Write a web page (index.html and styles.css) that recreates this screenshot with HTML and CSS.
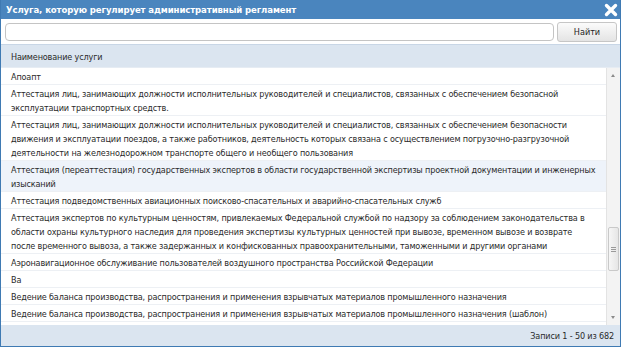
FILE: index.html
```html
<!DOCTYPE html>
<html lang="ru">
<head>
<meta charset="utf-8">
<link rel="stylesheet" href="styles.css">
</head>
<body>
<div class="dialog">
  <div class="titlebar">
    <span class="title">Услуга, которую регулирует административный регламент</span>
    <svg class="close" width="14" height="14" viewBox="0 0 14 14"><path d="M2.5 2.5 L11.5 11.5 M11.5 2.5 L2.5 11.5" stroke="#fff" stroke-width="3.4" stroke-linecap="round"/></svg>
  </div>
  <div class="search">
    <input class="field" type="text">
    <button class="btn">Найти</button>
  </div>
  <div class="header">Наименование услуги</div>
  <div class="listwrap">
    <div class="list">
      <div class="row">Апоапт</div>
      <div class="row">Аттестация лиц, занимающих должности исполнительных руководителей и специалистов, связанных с обеспечением безопасной эксплуатации транспортных средств.</div>
      <div class="row">Аттестация лиц, занимающих должности исполнительных руководителей и специалистов, связанных с обеспечением безопасности движения и эксплуатации поездов, а также работников, деятельность которых связана с осуществлением погрузочно-разгрузочной деятельности на железнодорожном транспорте общего и необщего пользования</div>
      <div class="row hover">Аттестация (переаттестация) государственных экспертов в области государственной экспертизы проектной документации и инженерных изысканий</div>
      <div class="row">Аттестация подведомственных авиационных поисково-спасательных и аварийно-спасательных служб</div>
      <div class="row">Аттестация экспертов по культурным ценностям, привлекаемых Федеральной службой по надзору за соблюдением законодательства в области охраны культурного наследия для проведения экспертизы культурных ценностей при вывозе, временном вывозе и возврате после временного вывоза, а также задержанных и конфискованных правоохранительными, таможенными и другими органами</div>
      <div class="row">Аэронавигационное обслуживание пользователей воздушного пространства Российской Федерации</div>
      <div class="row">Ва</div>
      <div class="row">Ведение баланса производства, распространения и применения взрывчатых материалов промышленного назначения</div>
      <div class="row">Ведение баланса производства, распространения и применения взрывчатых материалов промышленного назначения (шаблон)</div>
    </div>
    <div class="scrollbar">
      <div class="arrow up"></div>
      <div class="track">
        <div class="thumb"><span></span><span></span><span></span></div>
      </div>
      <div class="arrow down"></div>
    </div>
  </div>
  <div class="footer">Записи 1 - 50 из 682</div>
</div>
</body>
</html>
```
FILE: styles.css
```css
html, body {
  margin: 0;
  padding: 0;
  background: #fff;
}
.dialog {
  width: 621px;
  height: 347px;
  box-sizing: border-box;
  border: 1px solid #3f7ab3;
  border-top: none;
  display: flex;
  flex-direction: column;
  font-family: "DejaVu Sans Condensed", "DejaVu Sans", sans-serif;
  font-size: 9px;
  letter-spacing: -0.15px;
  color: #2a2a2a;
  overflow: hidden;
}
.titlebar {
  height: 19px;
  flex: none;
  background: #4a85be;
  display: flex;
  align-items: center;
  justify-content: space-between;
  padding: 0 2px 0 5px;
}
.title {
  color: #fff;
  font-weight: bold;
  font-size: 9.5px;
  letter-spacing: -0.1px;
}
.close {
  display: block;
}
.search {
  flex: none;
  display: flex;
  gap: 3px;
  padding: 4px 3px 3px 4px;
  height: 26px;
  box-sizing: border-box;
  border-bottom: 1px solid #c8d6e6;
}
.field {
  flex: 1;
  height: 18px;
  box-sizing: border-box;
  border: 1px solid #c4c4c4;
  border-radius: 4px;
  margin: 0;
  padding: 0 4px;
  background: #fff;
}
.btn {
  width: 60px;
  height: 20px;
  margin-top: -1px;
  box-sizing: border-box;
  border: 1px solid #c6c6c6;
  border-radius: 3px;
  background: linear-gradient(#fbfbfb, #e4e4e4);
  font-family: "DejaVu Sans Condensed", "DejaVu Sans", sans-serif;
  font-size: 9px;
  color: #222;
  padding: 0;
}
.header {
  flex: none;
  height: 23px;
  box-sizing: border-box;
  background: #dbe5f0;
  display: flex;
  align-items: center;
  padding: 1px 0 0 10px;
  border-bottom: 1px solid #e6ecf3;
}
.listwrap {
  flex: 1;
  min-height: 0;
  display: flex;
}
.list {
  flex: 1;
  overflow: hidden;
}
.row {
  padding: 2px 8px 0 10px;
  line-height: 14px;
  border-bottom: 1px solid #edf0f4;
}
.row.hover {
  background: #eef3fa;
}
.scrollbar {
  width: 13px;
  flex: none;
  display: flex;
  flex-direction: column;
  background: #f3f3f3;
  border-left: 1px solid #e3e3e3;
}
.arrow {
  height: 14px;
  flex: none;
  position: relative;
}
.arrow::after {
  content: "";
  position: absolute;
  left: 4px;
  border-left: 2.5px solid transparent;
  border-right: 2.5px solid transparent;
}
.arrow.up::after {
  top: 6px;
  border-bottom: 3px solid #8a8a8a;
}
.arrow.down::after {
  top: 5px;
  border-top: 3px solid #8a8a8a;
}
.track {
  flex: 1;
  display: flex;
  flex-direction: column;
  padding-top: 145px;
}
.thumb {
  height: 44px;
  margin: 0 1px;
  box-sizing: border-box;
  border: 1px solid #c9c9c9;
  border-radius: 2px;
  background: linear-gradient(90deg, #f6f6f6, #e6e6e6);
  display: flex;
  flex-direction: column;
  align-items: center;
  justify-content: center;
  gap: 1px;
}
.thumb span {
  width: 5px;
  height: 1px;
  background: #9a9a9a;
}
.footer {
  flex: none;
  height: 21px;
  background: #dbe5f0;
  display: flex;
  align-items: center;
  justify-content: flex-end;
  padding-right: 6px;
}
```
